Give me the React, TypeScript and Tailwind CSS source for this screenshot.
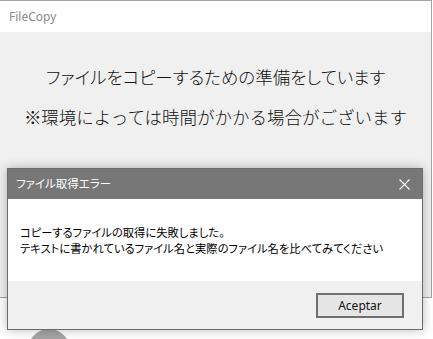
import React from 'react';

const jp = "font-['Meiryo_UI','Noto_Sans_CJK_JP',sans-serif]";

export default function App() {
    return (
        <div className="relative w-[433px] h-[339px] overflow-hidden bg-white">
            {/* background FileCopy window */}
            <div className="w-[432px] h-[298px] flex flex-col border-t border-r border-b border-[#a3a3a3]">
                <div className="h-[31px] bg-white flex items-center pl-[9px]">
                    <span className="text-[12px] text-[#8a8a8a] font-['Noto_Sans',sans-serif]">FileCopy</span>
                </div>
                <div className={`flex-1 bg-[#f0f0f0] flex flex-col items-center pt-[33px] gap-[16px] text-[17.5px] leading-[24px] text-[#111] font-light ${jp}`}>
                    <p className="[font-feature-settings:'palt']">ファイルをコピーするための準備をしています</p>
                    <p>※環境によっては時間がかかる場合がございます</p>
                </div>
            </div>

            {/* loading ring peeking out under the dialog */}
            <svg className="absolute left-[27px] top-[328px]" width="44" height="44" viewBox="0 0 44 44">
                <circle cx="22" cy="22" r="15" fill="none" stroke="#a5a5a5" strokeWidth="12" />
            </svg>

            {/* error dialog */}
            <div className="absolute left-[7px] top-[168px] w-[416px] h-[162px] flex flex-col border border-[#6b6b6b] bg-white shadow-[0_0_10px_rgba(0,0,0,0.28)]">
                <div className="h-[30px] bg-[#777777] flex items-center justify-between pl-[8px] pr-[12px]">
                    <span className={`text-[11.5px] text-white [font-feature-settings:'palt'] ${jp}`}>ファイル取得エラー</span>
                    <svg width="11" height="11" viewBox="0 0 11 11">
                        <path d="M0.5 0.5 L10.5 10.5 M10.5 0.5 L0.5 10.5" stroke="#ffffff" strokeWidth="1.1" />
                    </svg>
                </div>
                <div className={`h-[82px] bg-white pt-[25px] px-[12px] text-[11.3px] leading-[16px] text-black [font-feature-settings:'palt'] ${jp}`}>
                    <p>コピーするファイルの取得に失敗しました。</p>
                    <p>テキストに書かれているファイル名と実際のファイル名を比べてみてください</p>
                </div>
                <div className="flex-1 bg-[#f0f0f0] flex justify-end items-start pt-[12px] pr-[18px]">
                    <button className="w-[88px] h-[25px] border-2 border-[#707070] bg-[#e5e5e5] text-[12px] text-[#111] font-['Noto_Sans',sans-serif] leading-none">
                        Aceptar
                    </button>
                </div>
            </div>
        </div>
    );
}
